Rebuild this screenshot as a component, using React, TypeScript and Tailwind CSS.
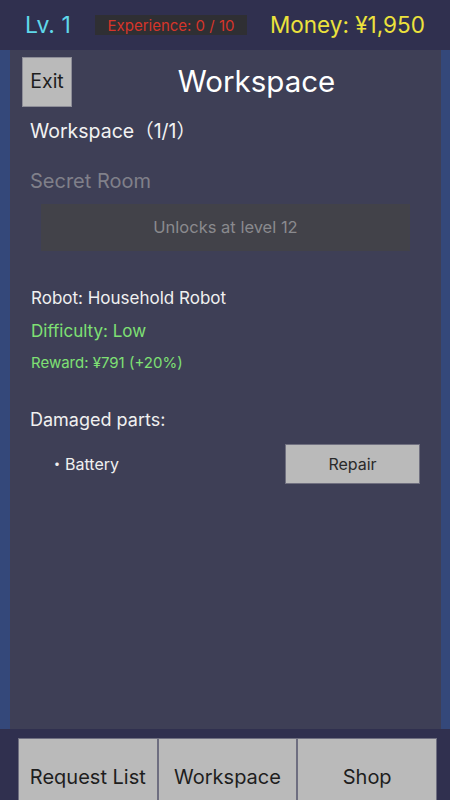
const font = { fontFamily: '"Inter", "Noto Sans CJK JP", sans-serif' };

function TopBar() {
  return (
    <div className="h-[50px] flex items-center shrink-0 bg-[#30304f]">
      <span className="ml-[25px] w-[60px] text-[23px] leading-none text-[#5fd8ea]">Lv. 1</span>
      <div className="ml-[10px] w-[152px] h-[20px] bg-[#2f2f33] flex items-center justify-center">
        <span className="text-[15px] leading-none text-[#d6352a]">Experience: 0 / 10</span>
      </div>
      <span className="ml-[23px] text-[22.5px] leading-none text-[#ece23c]">Money: ¥1,950</span>
    </div>
  );
}

function Panel() {
  return (
    <div className="flex-1 flex bg-[#34487a] pl-[10px] pr-[9px]">
      <div className="flex-1 bg-[#3e3f56] flex flex-col">
        <div className="flex items-center pt-[7px] pl-[12px]">
          <button className="w-[50px] h-[50px] bg-[#bababa] border border-[#8e8e98] text-[19.5px] text-[#1e1e1e] flex items-center justify-center">
            Exit
          </button>
          <div className="flex-1 text-center text-[29.5px] leading-none text-white">Workspace</div>
        </div>
        <div className="pl-[20px] pt-[12px] text-[19.5px] leading-[24px] text-[#f2f2f2]">Workspace（1/1）</div>
        <div className="pl-[20px] pt-[26px] text-[20px] leading-[24px] text-[#80808a]">Secret Room</div>
        <div className="mx-[31px] mt-[11px] h-[47px] bg-[#424249] flex items-center justify-center text-[16.5px] text-[#8a8a8e]">
          Unlocks at level 12
        </div>
        <div className="pl-[21px] pt-[37px] text-[17px] leading-[20px] text-[#f0f0f0]">Robot: Household Robot</div>
        <div className="pl-[21px] pt-[13px] text-[17px] leading-[20px] text-[#7fe074]">Difficulty: Low</div>
        <div className="pl-[21px] pt-[12px] text-[15px] leading-[20px] text-[#7fe074]">Reward: ¥791 (+20%)</div>
        <div className="pl-[20px] pt-[35px] text-[18px] leading-[24px] text-[#f0f0f0]">Damaged parts:</div>
        <div className="flex items-center mt-[12px]">
          <span className="pl-[39px] flex-1 text-[16px] text-[#f0f0f0]">・Battery</span>
          <button className="mr-[21px] w-[135px] h-[40px] bg-[#bababa] border border-[#707080] text-[16px] text-[#2a2a2a]">
            Repair
          </button>
        </div>
      </div>
    </div>
  );
}

function BottomBar() {
  const tabs = ["Request List", "Workspace", "Shop"];
  return (
    <div className="h-[71px] shrink-0 bg-[#30304f] flex pt-[9px] pl-[18px] pr-[13px]">
      {tabs.map((t) => (
        <button
          key={t}
          className="flex-1 h-[70px] bg-[#bababa] border border-[#6e6e80] flex justify-center pt-[28px] text-[20px] leading-none text-[#1e1e1e]"
        >
          {t}
        </button>
      ))}
    </div>
  );
}

export default function App() {
  return (
    <div className="w-[450px] h-[800px] flex flex-col overflow-hidden bg-[#30304f]" style={font}>
      <TopBar />
      <Panel />
      <BottomBar />
    </div>
  );
}
